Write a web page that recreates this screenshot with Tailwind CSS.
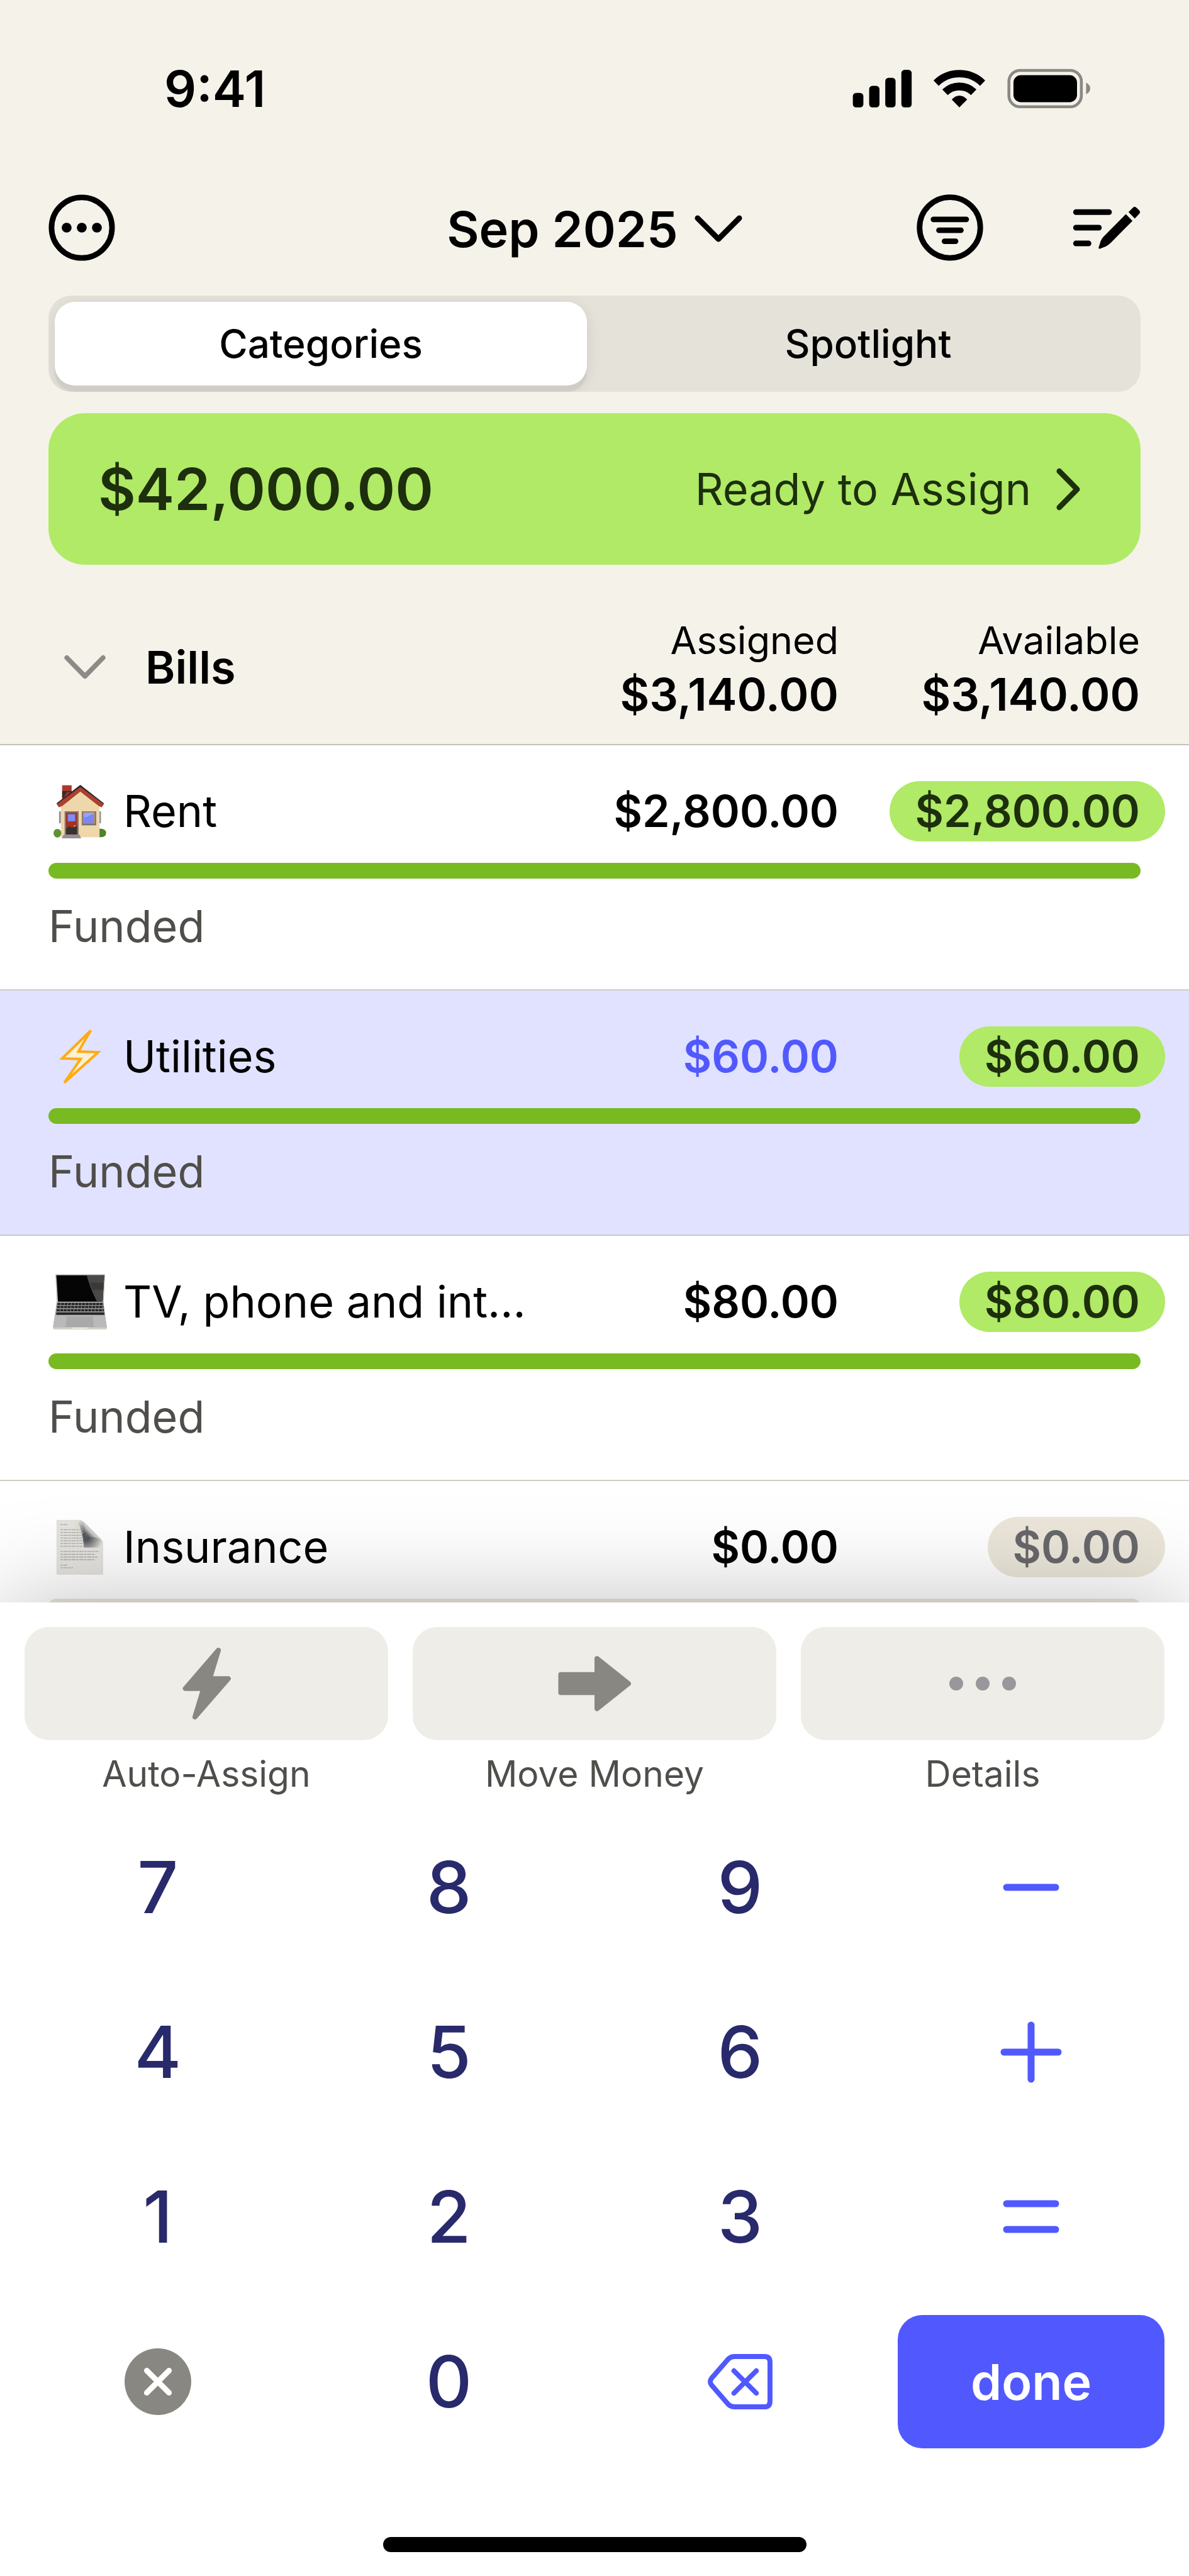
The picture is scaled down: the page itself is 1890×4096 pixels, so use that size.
<!DOCTYPE html>
<html lang="en">
  <head>
    <meta charset="UTF-8" />
    <meta name="viewport" content="width=device-width, initial-scale=1.0" />
    <title>Budget - Sep 2025</title>
    <script src="https://cdn.jsdelivr.net/npm/@tailwindcss/browser@4"></script>
  </head>
  <body class="flex flex-col h-screen overflow-hidden bg-white text-black font-['Inter',sans-serif]">
    <header class="shrink-0 bg-[#f5f2ea]">
      <!-- Status bar -->
      <div class="flex items-center justify-between h-[282px] pl-[261px] pr-[156px]">
        <span class="text-[80px] leading-none font-semibold">9:41</span>
        <svg class="w-[379px] h-16" viewBox="50 60 1155 195" aria-hidden="true">
          <rect x="52" y="178" width="51" height="70" rx="16" />
          <rect x="131" y="144" width="50" height="104" rx="16" />
          <rect x="209" y="105" width="50" height="143" rx="16" />
          <rect x="287" y="66" width="50" height="182" rx="16" />
          <path d="M455.4 130.5A162 162 0 0 1 680.6 130.5" fill="none" stroke="#000" stroke-width="36" />
          <path d="M498.5 175A100 100 0 0 1 637.5 175" fill="none" stroke="#000" stroke-width="38" />
          <path d="M568 248L531 210Q568 172 606 210Z" />
          <rect x="808" y="69" width="351" height="176" rx="54" fill="none" stroke="#8a8883" stroke-width="14" />
          <rect x="830" y="92" width="308" height="131" rx="36" />
          <path d="M1182 128Q1202 140 1202 157Q1202 174 1182 185Z" fill="#8a8883" />
        </svg>
      </div>

      <!-- Month bar -->
      <div class="grid grid-cols-[1fr_auto_1fr] items-center h-40 px-[77px]">
        <button aria-label="More" class="justify-self-start">
          <svg class="size-[106px]" viewBox="0 0 108 108">
            <circle cx="54" cy="54" r="49" fill="none" stroke="#000" stroke-width="9" />
            <circle cx="29.500" cy="54" r="8" />
            <circle cx="54" cy="54" r="8" />
            <circle cx="78.500" cy="54" r="8" />
          </svg>
        </button>
        <button class="flex items-center gap-[26px] pt-1 text-[79px] leading-none font-semibold">
          Sep 2025
          <svg class="w-[76px] h-[45px]" viewBox="0 0 78 46" fill="none" stroke="#000" stroke-width="9" stroke-linecap="round" stroke-linejoin="round">
            <path d="M5 5L39 39L73 5" />
          </svg>
        </button>
        <div class="flex items-center justify-self-end gap-[142px]">
          <button aria-label="Filter">
            <svg class="size-[106px]" viewBox="360 672 325 325" stroke="#000" stroke-width="27" stroke-linecap="round" fill="none">
              <circle cx="522.500" cy="834" r="148" />
              <path d="M442 794H602M469 847H576M496 901H550" />
            </svg>
          </button>
          <button aria-label="Edit plan">
            <svg class="w-[108px] h-[70px]" viewBox="1120 728 328 212">
              <path d="M1136 759H1296M1136 834H1247M1136 910H1197" stroke="#000" stroke-width="27" stroke-linecap="round" />
              <path d="M1377 769L1409 801L1306 905Q1294 917 1281 924L1252 936Q1244 937 1246 929L1255 900Q1259 889 1268 879Z" />
              <path d="M1390 759L1410 738Q1419 728 1429 738L1441 750Q1450 759 1441 768L1420 790Z" />
            </svg>
          </button>
        </div>
      </div>

      <!-- Tabs -->
      <div role="tablist" class="grid grid-cols-2 gap-6 h-[153px] mt-7 mx-[77px] p-[10px] rounded-[36px] overflow-hidden bg-[#e5e2da] text-[62px] leading-none font-medium">
        <button role="tab" aria-selected="true" class="rounded-[32px] bg-white shadow-[0_10px_2px_#d0cdc6,0_6px_24px_#0000001a]">Categories</button>
        <button role="tab" aria-selected="false">Spotlight</button>
      </div>

      <!-- Ready to assign -->
      <button class="flex items-center justify-between w-[calc(100%-154px)] h-[241px] mt-[34px] mx-[77px] pl-[79px] pr-[95px] rounded-[58px] bg-[#b0ea66] text-[#1d2f0c]">
        <span class="text-[92px] leading-none font-semibold">$42,000.00</span>
        <span class="flex items-center gap-[40px] text-[70px] leading-none">
          Ready to Assign
          <svg class="w-[39px] h-[68px]" viewBox="0 0 40 69" fill="none" stroke="currentColor" stroke-width="9" stroke-linecap="round" stroke-linejoin="round">
            <path d="M5 5L34 34.500L5 64" />
          </svg>
        </span>
      </button>
    </header>

    <!-- Categories -->
    <main class="flex-1 min-h-0 overflow-hidden">
      <table class="w-full table-fixed border-collapse text-[70px] leading-[96px]">
        <colgroup>
          <col />
          <col class="w-[440px]" />
          <col class="w-[557px]" />
        </colgroup>
        <thead class="bg-[#f5f2ea] border-b-2 border-[#c6c2b6]">
          <tr class="text-[72px]">
            <th class="pt-10 pl-[101px] text-left font-semibold">
              <button class="flex items-center gap-[62px]">
                <svg class="w-[68px] h-10" viewBox="0 0 69 41" fill="none" stroke="#8c8b86" stroke-width="8" stroke-linecap="round" stroke-linejoin="round">
                  <path d="M5 5L34.500 35L64 5" />
                </svg>
                Bills
              </button>
            </th>
            <th class="pt-[77px] pb-[36px] text-right font-semibold leading-[86px]">
              <div class="text-[61px] leading-[86px] font-normal">Assigned</div>
              $3,140.00
            </th>
            <th class="pt-[77px] pb-[36px] pr-[78px] text-right font-semibold leading-[86px]">
              <div class="text-[61px] leading-[86px] font-normal">Available</div>
              $3,140.00
            </th>
          </tr>
        </thead>

        <tbody class="border-b-2 border-[#d0cdc3]">
          <tr>
            <td class="pt-[57px] pb-[34px] pl-[84px]">
              <div class="flex items-center gap-[25px] whitespace-nowrap">
                <svg class="w-[87px] h-[90px]" viewBox="45 52 265 272" aria-hidden="true">
                  <rect x="90" y="62" width="46" height="70" fill="#a83a2c" />
                  <path d="M100 118L112 96H136V90H90V124Z" fill="#3a2a28" />
                  <path d="M75 188H84V246H75ZM269 188H278V246H269Z" fill="#8d9097" />
                  <path d="M84 150L178 80L271 150V314H84Z" fill="#efd7ac" />
                  <path d="M178 60L62 150L72 160L178 82L282 160L293 150Z" fill="#252629" />
                  <path d="M178 70L64 154L74 169L90 163L178 93L268 163L282 169L292 154Z" fill="#ad4030" />
                  <ellipse cx="67" cy="294" rx="19" ry="21" fill="#5f9436" />
                  <path d="M271 272Q303 272 303 294Q303 314 271 314Z" fill="#4f822b" />
                  <rect x="102" y="188" width="68" height="115" fill="#85766c" />
                  <rect x="109" y="195" width="53" height="105" fill="#a52f22" />
                  <path d="M109 270L126 262L140 268L162 258V300H109Z" fill="#343232" />
                  <rect x="117" y="201" width="37" height="36" fill="#7b8cfb" stroke="#7c5d62" stroke-width="3" />
                  <circle cx="151" cy="259" r="4" fill="#e8b04a" />
                  <path d="M98 301H174L182 319H88Z" fill="#929190" />
                  <rect x="185" y="188" width="70" height="68" fill="#777173" />
                  <rect x="189" y="190" width="61" height="58" fill="#b18a6e" />
                  <rect x="195" y="196" width="48" height="47" fill="#7886fa" />
                  <path d="M195 218V196H243V202L222 208L212 215Z" fill="#98a5fb" />
                </svg>
                Rent
              </div>
            </td>
            <td class="pt-[57px] pb-[34px] text-right font-semibold">$2,800.00</td>
            <td class="pt-[57px] pb-[34px] pr-[38px] text-right font-semibold">
              <span class="inline-block align-top px-10 rounded-full bg-[#b0ea66] text-[#1d2f0c]">$2,800.00</span>
            </td>
          </tr>
          <tr>
            <td colspan="3" class="px-[77px] pb-[52px]">
              <div class="h-[25px] rounded-full bg-[#78ba21]"></div>
              <div class="mt-7 text-[#4f4e4a]">Funded</div>
            </td>
          </tr>
        </tbody>

        <tbody class="border-b-2 border-[#cbc7c6] bg-[#e1e2ff]">
          <tr>
            <td class="pt-[57px] pb-[34px] pl-[84px]">
              <div class="flex items-center gap-[25px] whitespace-nowrap">
                <svg class="w-[87px] h-[90px]" viewBox="85 1663 88 90" aria-hidden="true">
                  <path d="M146 1666L100 1711L129.500 1712L103.500 1750L158 1701L126 1700Z" fill="#fdf0d2" stroke="#ffab10" stroke-width="4" stroke-linejoin="miter" />
                </svg>
                Utilities
              </div>
            </td>
            <td class="pt-[57px] pb-[34px] text-right font-semibold text-[#5159fe]">$60.00</td>
            <td class="pt-[57px] pb-[34px] pr-[38px] text-right font-semibold">
              <span class="inline-block align-top px-10 rounded-full bg-[#b0ea66] text-[#1d2f0c]">$60.00</span>
            </td>
          </tr>
          <tr>
            <td colspan="3" class="px-[77px] pb-[52px]">
              <div class="h-[25px] rounded-full bg-[#78ba21]"></div>
              <div class="mt-7 text-[#4f4e4a]">Funded</div>
            </td>
          </tr>
        </tbody>

        <tbody class="border-b-2 border-[#d0cdc3]">
          <tr>
            <td class="pt-[57px] pb-[34px] pl-[84px]">
              <div class="flex items-center gap-[25px] whitespace-nowrap">
                <svg class="w-[87px] h-[90px]" viewBox="45 56 265 274" aria-hidden="true">
                  <path d="M57 60H298L291 200H64Z" fill="#c5c4c1" />
                  <path d="M62 64H294L286 192H70Z" fill="#050505" />
                  <path d="M209 64H294L286 192H259Q226 130 209 64Z" fill="#4b4947" />
                  <path d="M225 100H291L288 134H238Z" fill="#3a3938" />
                  <path d="M64 193H290L307 318H45Z" fill="#bab9b9" />
                  <path d="M64 196H290L296 258H58Z" fill="#8f8e8d" />
                  <path d="M68 203H288M66 218H290M64 234H292" stroke="#222" stroke-width="10" stroke-dasharray="14 3" />
                  <path d="M62 250H294" stroke="#222" stroke-width="11" />
                  <path d="M112 264H238L244 315H107Z" fill="#a9a9aa" />
                  <path d="M45 317H138L142 322H210L214 317H307V323Q304 327 298 327H54Q46 327 45 322Z" fill="#d6d1c8" />
                </svg>
                TV, phone and int...
              </div>
            </td>
            <td class="pt-[57px] pb-[34px] text-right font-semibold">$80.00</td>
            <td class="pt-[57px] pb-[34px] pr-[38px] text-right font-semibold">
              <span class="inline-block align-top px-10 rounded-full bg-[#b0ea66] text-[#1d2f0c]">$80.00</span>
            </td>
          </tr>
          <tr>
            <td colspan="3" class="px-[77px] pb-[52px]">
              <div class="h-[25px] rounded-full bg-[#78ba21]"></div>
              <div class="mt-7 text-[#4f4e4a]">Funded</div>
            </td>
          </tr>
        </tbody>

        <tbody>
          <tr>
            <td class="pt-[57px] pb-[34px] pl-[84px]">
              <div class="flex items-center gap-[25px] whitespace-nowrap">
                <svg class="w-[87px] h-[90px]" viewBox="45 42 265 272" aria-hidden="true">
                  <defs>
                    <linearGradient id="curl" x1="0" y1="1" x2="1" y2="0">
                      <stop offset="0.35" stop-color="#55585b" />
                      <stop offset="0.5" stop-color="#c9cbcc" />
                      <stop offset="1" stop-color="#f7f7f7" />
                    </linearGradient>
                    <radialGradient id="fold" cx="205" cy="130" r="85" gradientUnits="userSpaceOnUse">
                      <stop offset="0.2" stop-color="#54575a" />
                      <stop offset="1" stop-color="#54575a" stop-opacity="0" />
                    </radialGradient>
                  </defs>
                  <path d="M63 46H172Q204 52 204 128H250Q288 130 288 170V311H63Z" fill="#e2dfd8" />
                  <path d="M70 53H150V150H280V304H70Z" fill="#e5e3df" />
                  <path d="M158 46H172Q204 52 204 128H250Q288 130 288 170V180H195Q190 90 158 46Z" fill="url(#fold)" />
                  <path d="M172 46Q188 48 200 60L272 132Q284 142 288 166Q280 132 240 130H204Q206 62 172 46Z" fill="url(#curl)" />
                  <path d="M80 69H117M82 94H190M82 107H195M82 121H185M82 134H195M82 147H195M82 160H190M82 174H190M82 199H265M82 213H250M82 226H260M82 239H250M82 265H115M82 278H142" stroke="#aaa9ab" stroke-width="4" stroke-dasharray="12 3 20 3" />
                </svg>
                Insurance
              </div>
            </td>
            <td class="pt-[57px] pb-[34px] text-right font-semibold">$0.00</td>
            <td class="pt-[57px] pb-[34px] pr-[38px] text-right font-semibold">
              <span class="inline-block align-top px-10 rounded-full bg-[#ebe6d9] text-[#68686c]">$0.00</span>
            </td>
          </tr>
          <tr>
            <td colspan="3" class="px-[77px] pb-[52px]">
              <div class="h-[25px] rounded-full bg-[#ebe6d9]"></div>
            </td>
          </tr>
        </tbody>
      </table>
    </main>

    <!-- Keypad sheet -->
    <section class="relative z-10 shrink-0 pt-[39px] pb-[38px] bg-white shadow-[0_0_150px_#00000040]">
      <div class="grid grid-cols-3 gap-[39px] px-[39px] text-[57px] leading-[60px] text-[#4f4e4a] text-center">
        <button>
          <span class="flex items-center justify-center h-[180px] mb-6 rounded-[39px] bg-[#eeede7]">
            <svg class="w-[77px] h-[116px]" viewBox="293 2660 78 118" fill="#888781" stroke="#888781" stroke-width="8" stroke-linejoin="round">
              <path d="M351 2665L297.500 2727H327L313 2773L367 2711H337Z" />
            </svg>
          </span>
          Auto-Assign
        </button>
        <button>
          <span class="flex items-center justify-center h-[180px] mb-6 rounded-[39px] bg-[#eeede7]">
            <svg class="w-[117px] h-[90px]" viewBox="900 2674 119 91" fill="#888781" stroke="#888781" stroke-width="8" stroke-linejoin="round">
              <path d="M904.500 2705H963V2679L1014 2719.500L963 2760V2734H904.500Z" />
            </svg>
          </span>
          Move Money
        </button>
        <button>
          <span class="flex items-center justify-center gap-5 h-[180px] mb-6 rounded-[39px] bg-[#eeede7]">
            <span class="size-[22px] rounded-full bg-[#98979c]"></span>
            <span class="size-[22px] rounded-full bg-[#98979c]"></span>
            <span class="size-[22px] rounded-full bg-[#98979c]"></span>
          </span>
          Details
        </button>
      </div>

      <div class="grid grid-cols-4 auto-rows-[212px] gap-x-[39px] gap-y-[50px] mt-11 px-[39px] text-[114px] leading-none font-medium text-[#282a6b]">
        <button>7</button>
        <button>8</button>
        <button>9</button>
        <button aria-label="Minus" class="flex items-center justify-center">
          <svg class="size-[100px]" viewBox="0 0 100 100" stroke="#5159fe" stroke-width="11" stroke-linecap="round"><path d="M11 50H89" /></svg>
        </button>
        <button>4</button>
        <button>5</button>
        <button>6</button>
        <button aria-label="Plus" class="flex items-center justify-center">
          <svg class="size-[100px]" viewBox="0 0 100 100" stroke="#5159fe" stroke-width="11" stroke-linecap="round"><path d="M7 50H93M50 7V93" /></svg>
        </button>
        <button>1</button>
        <button>2</button>
        <button>3</button>
        <button aria-label="Equals" class="flex items-center justify-center">
          <svg class="size-[100px]" viewBox="0 0 100 100" stroke="#5159fe" stroke-width="11" stroke-linecap="round"><path d="M11 29H89M11 70H89" /></svg>
        </button>
        <button aria-label="Clear" class="flex items-center justify-center">
          <svg class="size-[106px]" viewBox="0 0 108 108">
            <circle cx="54" cy="54" r="54" fill="#888781" />
            <path d="M36 36L72 72M72 36L36 72" stroke="#fff" stroke-width="9" stroke-linecap="round" />
          </svg>
        </button>
        <button>0</button>
        <button aria-label="Delete" class="flex items-center justify-center">
          <svg class="w-[105px] h-[90px]" viewBox="0 0 106 91" fill="none" stroke="#5159fe" stroke-width="8" stroke-linecap="round" stroke-linejoin="round">
            <path d="M44 5H92Q101 5 101 14V77Q101 86 92 86H44Q38 86 34 82L7 51Q3 45.500 7 40L34 9Q38 5 44 5Z" />
            <path d="M43 28L79 64M79 28L43 64" />
          </svg>
        </button>
        <button class="rounded-[39px] bg-[#5159fe] text-[79px] font-semibold text-white">done</button>
      </div>

      <!-- Home indicator -->
      <div class="w-[673px] h-6 mt-[141px] mx-auto rounded-full bg-black"></div>
    </section>
  </body>
</html>
